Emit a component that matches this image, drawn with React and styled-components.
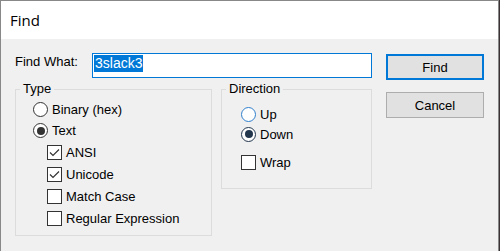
import React from 'react';
import styled, { createGlobalStyle } from 'styled-components';

const GlobalStyle = createGlobalStyle`
  * {
    margin: 0;
    padding: 0;
    box-sizing: border-box;
  }

  html, body {
    width: 500px;
    height: 251px;
    overflow: hidden;
    background: #3a3236;
    font-family: 'Liberation Sans', Arial, sans-serif;
    font-size: 13px;
    color: #000;
  }
`;

const Window = styled.div`
  width: 499px;
  height: 251px;
  display: flex;
  flex-direction: column;
  background: #f0f0f0;
  border: 1px solid #888;
  border-bottom: none;
`;

const TitleBar = styled.div`
  height: 38px;
  flex: none;
  background: #fff;
  padding: 9px 0 0 9px;
`;

const Title = styled.span`
  font-family: 'Open Sans', 'Noto Sans', sans-serif;
  font-size: 15px;
  line-height: 20px;
  color: #000;
`;

const Body = styled.div`
  flex: 1;
  display: flex;
  gap: 14px;
  padding: 14px 0 0 14px;
`;

const Main = styled.div`
  width: 357px;
  display: flex;
  flex-direction: column;
`;

const FindRow = styled.div`
  display: flex;
  align-items: flex-start;
  height: 25px;
`;

const Label = styled.label`
  width: 77px;
  line-height: 15px;
  padding-top: 1px;
`;

const Edit = styled.div`
  width: 280px;
  height: 25px;
  border: 1px solid #0078d7;
  background: #fff;
  padding: 1px;
`;

const Selected = styled.span`
  display: inline-block;
  background: #0078d7;
  color: #fff;
  line-height: 17px;
  padding: 0 1px;
  font-size: 14px;
`;

const Groups = styled.div`
  display: flex;
  align-items: flex-start;
  gap: 9px;
  margin-top: 4px;
`;

const Group = styled.fieldset`
  width: ${p => p.$width}px;
  border: 1px solid #dcdcdc;
  padding: 0;
`;

const Legend = styled.legend`
  margin-left: 4px;
  padding: 0 3px;
  line-height: 14px;
`;

const Options = styled.div`
  display: flex;
  flex-direction: column;
  padding: ${p => p.$pad};
`;

const OptionRow = styled.div`
  display: flex;
  align-items: center;
  gap: 4px;
  height: ${p => p.$h || 21}px;
  padding-left: ${p => p.$indent || 0}px;
  margin-top: ${p => p.$gap || 0}px;
`;

const RadioDot = styled.span`
  width: 15px;
  height: 15px;
  flex: none;
  border-radius: 50%;
  border: 1px solid ${p => p.$color || '#333'};
  background: #fff;
  display: flex;
  align-items: center;
  justify-content: center;

  &::after {
    content: '';
    width: 8px;
    height: 8px;
    border-radius: 50%;
    background: ${p => (p.$checked ? p.$color || '#333' : 'transparent')};
  }
`;

const Box = styled.span`
  width: 15px;
  height: 15px;
  flex: none;
  border: 1px solid #333;
  background: #fff;
  display: flex;
  align-items: center;
  justify-content: center;
`;

const Buttons = styled.div`
  display: flex;
  flex-direction: column;
  gap: 12px;
  padding-top: 1px;
`;

const Button = styled.button`
  width: 98px;
  height: 26px;
  font-family: 'Liberation Sans', Arial, sans-serif;
  font-size: 13px;
  color: #000;
  background: #e1e1e1;
  border: ${p => (p.$default ? '2px solid #0078d7' : '1px solid #adadad')};
`;

function Radio({ label, checked, color }) {
  return (
    <>
      <RadioDot $checked={checked} $color={color} />
      <span>{label}</span>
    </>
  );
}

function Check({ label, checked }) {
  return (
    <>
      <Box>
        {checked && (
          <svg width="11" height="9" viewBox="0 0 11 9">
            <polyline points="1,4.5 4,7.5 10,1.5" fill="none" stroke="#333" strokeWidth="1.2" />
          </svg>
        )}
      </Box>
      <span>{label}</span>
    </>
  );
}

export default function App() {
  return (
    <>
      <GlobalStyle />
      <Window>
        <TitleBar>
          <Title>Find</Title>
        </TitleBar>
        <Body>
          <Main>
            <FindRow>
              <Label>Find What:</Label>
              <Edit>
                <Selected>3slack3</Selected>
              </Edit>
            </FindRow>
            <Groups>
              <Group $width={197}>
                <Legend>Type</Legend>
                <Options $pad="3px 0 6px 17px">
                  <OptionRow><Radio label="Binary (hex)" /></OptionRow>
                  <OptionRow><Radio label="Text" checked /></OptionRow>
                  <OptionRow $h={22} $indent={14}><Check label="ANSI" checked /></OptionRow>
                  <OptionRow $h={22} $indent={14}><Check label="Unicode" checked /></OptionRow>
                  <OptionRow $h={22} $indent={14}><Check label="Match Case" /></OptionRow>
                  <OptionRow $h={22} $indent={14}><Check label="Regular Expression" /></OptionRow>
                </Options>
              </Group>
              <Group $width={151}>
                <Legend>Direction</Legend>
                <Options $pad="8px 0 15px 19px">
                  <OptionRow $h={20}><Radio label="Up" color="#2f7fcc" /></OptionRow>
                  <OptionRow $h={20}><Radio label="Down" checked color="#22364c" /></OptionRow>
                  <OptionRow $h={21} $gap={8}><Check label="Wrap" /></OptionRow>
                </Options>
              </Group>
            </Groups>
          </Main>
          <Buttons>
            <Button $default>Find</Button>
            <Button>Cancel</Button>
          </Buttons>
        </Body>
      </Window>
    </>
  );
}
